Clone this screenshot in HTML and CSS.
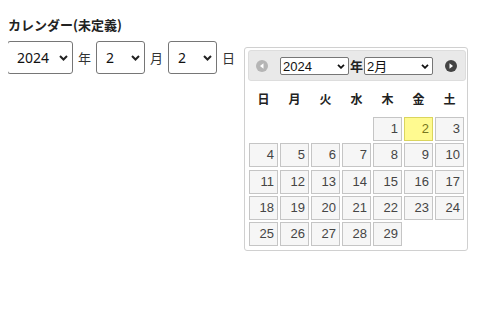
FILE: index.html
```html
<!DOCTYPE html>
<html lang="ja">
<head>
<meta charset="utf-8">
<link rel="stylesheet" href="styles.css">
</head>
<body>
<div class="title">カレンダー(未定義)</div>
<div class="row">
  <span class="sel sel-year">
    <select class="big"><option>2024</option></select>
    <svg class="chev" width="9" height="6" viewBox="0 0 9 6"><path d="M1 1l3.5 3.5L8 1" fill="none" stroke="#222" stroke-width="2"/></svg>
  </span>
  <span class="lbl">年</span>
  <span class="sel sel-small">
    <select class="big"><option>2</option></select>
    <svg class="chev" width="9" height="6" viewBox="0 0 9 6"><path d="M1 1l3.5 3.5L8 1" fill="none" stroke="#222" stroke-width="2"/></svg>
  </span>
  <span class="lbl">月</span>
  <span class="sel sel-small">
    <select class="big"><option>2</option></select>
    <svg class="chev" width="9" height="6" viewBox="0 0 9 6"><path d="M1 1l3.5 3.5L8 1" fill="none" stroke="#222" stroke-width="2"/></svg>
  </span>
  <span class="lbl">日</span>

  <div class="dp">
    <div class="dp-head">
      <svg class="nav" width="12" height="12" viewBox="0 0 12 12"><circle cx="6" cy="6" r="6" fill="#b5b5b5"/><path d="M7.5 3.2v5.6L4 6z" fill="#fff"/></svg>
      <div class="dp-title">
        <span class="msel">
          <select class="small"><option>2024</option></select>
          <svg class="chev2" width="8" height="5" viewBox="0 0 8 5"><path d="M1 0.8l3 3 3-3" fill="none" stroke="#111" stroke-width="1.8"/></svg>
        </span>
        <span class="ylbl">年</span>
        <span class="msel">
          <select class="small"><option>2月</option></select>
          <svg class="chev2" width="8" height="5" viewBox="0 0 8 5"><path d="M1 0.8l3 3 3-3" fill="none" stroke="#111" stroke-width="1.8"/></svg>
        </span>
      </div>
      <svg class="nav" width="12" height="12" viewBox="0 0 12 12"><circle cx="6" cy="6" r="6" fill="#444"/><path d="M4.5 3.2v5.6L8 6z" fill="#fff"/></svg>
    </div>
    <div class="wk">
      <span>日</span><span>月</span><span>火</span><span>水</span><span>木</span><span>金</span><span>土</span>
    </div>
    <div class="days">
      <span class="empty"></span><span class="empty"></span><span class="empty"></span><span class="empty"></span>
      <a>1</a><a class="today">2</a><a>3</a>
      <a>4</a><a>5</a><a>6</a><a>7</a><a>8</a><a>9</a><a>10</a>
      <a>11</a><a>12</a><a>13</a><a>14</a><a>15</a><a>16</a><a>17</a>
      <a>18</a><a>19</a><a>20</a><a>21</a><a>22</a><a>23</a><a>24</a>
      <a>25</a><a>26</a><a>27</a><a>28</a><a>29</a>
    </div>
  </div>
</div>
</body>
</html>
```
FILE: styles.css
```css
body {
  margin: 8px;
  background: #fff;
  font-family: "Noto Sans CJK JP", "Noto Sans", sans-serif;
  color: #222;
}
.title {
  margin-top: 8px;
  font-size: 13px;
  line-height: 18px;
  font-weight: bold;
  color: #222;
}
.row {
  display: flex;
  align-items: flex-start;
  margin-top: 7px;
}
.sel {
  position: relative;
  display: inline-block;
  height: 33px;
}
.sel-year { width: 66px; margin-left: -1px; }
.sel-small { width: 49px; }
select.big {
  appearance: none;
  -webkit-appearance: none;
  width: 100%;
  height: 33px;
  box-sizing: border-box;
  border: 1px solid #767676;
  border-radius: 3px;
  background: #fff;
  padding: 0 0 0 9px;
  font-family: "Noto Sans", sans-serif;
  font-size: 14px;
  color: #111;
  margin: 0;
}
.chev {
  position: absolute;
  right: 5px;
  top: 14px;
  pointer-events: none;
}
.lbl {
  font-size: 13px;
  line-height: 16px;
  color: #333;
  margin: 9px 5px 0 5px;
}
.dp {
  margin-left: 4px;
  margin-top: 6px;
  width: 224px;
  box-sizing: border-box;
  border: 1px solid #d0d0d0;
  border-radius: 3px;
  background: #fff;
  padding: 2px 1px 4px 3px;
  font-family: "Liberation Sans", Arial, sans-serif;
}
.dp-head {
  height: 31px;
  box-sizing: border-box;
  background: #e9e9e9;
  border: 1px solid #dddddd;
  border-radius: 3px;
  display: flex;
  align-items: center;
  justify-content: space-between;
  padding: 0 8px 0 7px;
}
.nav { display: block; }
.dp-title {
  display: flex;
  align-items: center;
}
.msel {
  position: relative;
  display: inline-block;
  width: 69px;
  height: 18px;
}
select.small {
  appearance: none;
  -webkit-appearance: none;
  width: 100%;
  height: 18px;
  box-sizing: border-box;
  border: 1px solid #767676;
  border-radius: 2px;
  background: #fff;
  padding: 0 0 0 2px;
  font-family: "Liberation Sans", "Noto Sans CJK JP", sans-serif;
  font-size: 13px;
  color: #111;
  margin: 0;
}
.chev2 {
  position: absolute;
  right: 4px;
  top: 7px;
  pointer-events: none;
}
.ylbl {
  font-family: "Noto Sans CJK JP", sans-serif;
  font-weight: bold;
  font-size: 13px;
  color: #222;
  width: 15px;
  text-align: center;
}
.wk {
  display: grid;
  grid-template-columns: repeat(7, 29px);
  column-gap: 2px;
  margin: 4px 0 0 1px;
  height: 26px;
  align-items: center;
}
.wk span {
  text-align: center;
  font-family: "Noto Sans CJK JP", sans-serif;
  font-weight: bold;
  font-size: 12px;
  color: #222;
}
.days {
  display: grid;
  grid-template-columns: repeat(7, 29px);
  grid-auto-rows: 24px;
  column-gap: 2px;
  row-gap: 2.25px;
  margin: 6px 0 0 1px;
}
.days a {
  box-sizing: border-box;
  border: 1px solid #c5c5c5;
  background: #f6f6f6;
  color: #454545;
  font-size: 13px;
  line-height: 22px;
  text-align: right;
  padding-right: 3px;
}
.days a.today {
  border-color: #dad55e;
  background: #fffa90;
  color: #777620;
}
```
